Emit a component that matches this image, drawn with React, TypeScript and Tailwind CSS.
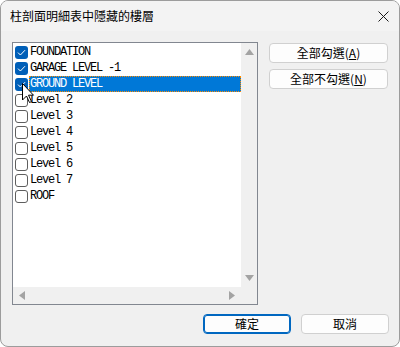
import React from "react";

const items = [
  { label: "FOUNDATION", checked: true },
  { label: "GARAGE LEVEL -1", checked: true },
  { label: "GROUND LEVEL", checked: true, selected: true },
  { label: "Level 2", checked: false },
  { label: "Level 3", checked: false },
  { label: "Level 4", checked: false },
  { label: "Level 5", checked: false },
  { label: "Level 6", checked: false },
  { label: "Level 7", checked: false },
  { label: "ROOF", checked: false },
];

function Check({ checked }: { checked: boolean }) {
  if (checked) {
    return (
      <div className="w-[13px] h-[13px] rounded-[3px] bg-[#005fb8] flex items-center justify-center shrink-0">
        <svg width="9" height="7" viewBox="0 0 9 7">
          <path d="M1 3.6 L3.4 6 L8 1.2" fill="none" stroke="#ffffff" strokeWidth="1" />
        </svg>
      </div>
    );
  }
  return <div className="w-[13px] h-[13px] rounded-[3px] bg-white border border-[#5e5e5e] shrink-0" />;
}

function Btn({ children, primary }: { children: React.ReactNode; primary?: boolean }) {
  return (
    <div
      className={
        "h-[20px] flex items-center justify-center rounded-[4px] text-[12px] text-black bg-[#fdfdfd] " +
        (primary ? "border border-[#0067c0] shadow-[inset_0_0_0_1px_#0067c0]" : "border border-[#d0d0d0]")
      }
      style={{ fontFamily: '"Noto Sans CJK TC", sans-serif' }}
    >
      {children}
    </div>
  );
}

export default function App() {
  return (
    <div className="w-[400px] h-[347px] bg-white">
      <div className="relative w-[400px] h-[347px] rounded-[8px] border border-[#9c9c9c] overflow-hidden bg-[#f0f0f0] flex flex-col">
        <div className="h-[30px] bg-[#f3f3f3] flex items-center justify-between pl-[9px] pr-[9px] shrink-0">
          <span className="text-[12px] text-black" style={{ fontFamily: '"Noto Sans CJK TC", sans-serif' }}>
            柱剖面明細表中隱藏的樓層
          </span>
          <svg width="11" height="11" viewBox="0 0 11 11" className="mr-[1px]">
            <path d="M0.5 0.5 L10.5 10.5 M10.5 0.5 L0.5 10.5" stroke="#1a1a1a" strokeWidth="1" />
          </svg>
        </div>
        <div className="flex flex-col pl-[11px] pr-[10px] pt-[11px]">
          <div className="flex gap-[11px]">
            <div className="w-[246px] h-[263px] border border-[#828790] bg-white flex flex-col">
              <div className="flex flex-1 min-h-0">
                <div className="flex-1 pt-[1px]">
                  {items.map((it) => (
                    <div key={it.label} className="h-[16px] flex items-center">
                      <div className="ml-[2px] mr-[1px]">
                        <Check checked={it.checked} />
                      </div>
                      <div
                        className={
                          "flex-1 h-[16px] flex items-center pl-[1px] text-[12px] tracking-[-1.2px] " +
                          (it.selected
                            ? "bg-[#0078d7] text-white outline-1 outline-dotted outline-[#ff8c00] -outline-offset-1"
                            : "text-black")
                        }
                        style={{ fontFamily: '"Liberation Mono", monospace' }}
                      >
                        {it.label}
                      </div>
                    </div>
                  ))}
                </div>
                <div className="w-[16px] bg-[#f0f0f0] flex flex-col items-center justify-between py-[6px]">
                  <svg width="9" height="6" viewBox="0 0 9 6">
                    <path d="M4.5 0 L9 6 L0 6 Z" fill="#a3a3a3" />
                  </svg>
                  <svg width="9" height="6" viewBox="0 0 9 6">
                    <path d="M0 0 L9 0 L4.5 6 Z" fill="#a3a3a3" />
                  </svg>
                </div>
              </div>
              <div className="h-[17px] flex shrink-0">
                <div className="flex-1 bg-[#f0f0f0] flex items-center justify-between px-[6px]">
                  <svg width="6" height="9" viewBox="0 0 6 9">
                    <path d="M6 0 L6 9 L0 4.5 Z" fill="#a3a3a3" />
                  </svg>
                  <svg width="6" height="9" viewBox="0 0 6 9">
                    <path d="M0 0 L6 4.5 L0 9 Z" fill="#a3a3a3" />
                  </svg>
                </div>
                <div className="w-[16px] bg-[#f0f0f0]" />
              </div>
            </div>
            <div className="w-[119px] flex flex-col gap-[6px] pt-[1px]">
              <Btn>
                全部勾選(<span className="underline">A</span>)
              </Btn>
              <Btn>
                全部不勾選(<span className="underline">N</span>)
              </Btn>
            </div>
          </div>
          <div className="flex justify-end gap-[10px] mt-[9px]">
            <div className="w-[88px]">
              <Btn primary>確定</Btn>
            </div>
            <div className="w-[88px]">
              <Btn>取消</Btn>
            </div>
          </div>
        </div>
        <svg className="absolute left-[21px] top-[82px]" width="13" height="21" viewBox="0 0 13 21">
          <path
            d="M0.5 0.5 L0.5 17 L4.5 13 L7.5 19.5 L9.5 18.5 L6.5 12.2 L11.5 12.2 Z"
            fill="#ffffff"
            stroke="#000000"
            strokeWidth="1"
            strokeLinejoin="miter"
          />
        </svg>
      </div>
    </div>
  );
}
